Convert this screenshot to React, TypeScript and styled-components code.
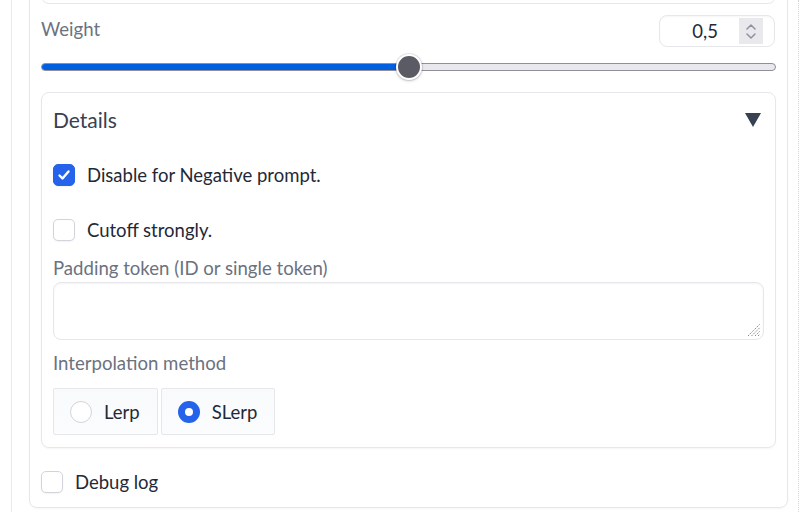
import React from "react";
import styled, { createGlobalStyle } from "styled-components";

const Global = createGlobalStyle`
  html, body { margin: 0; padding: 0; background: #ffffff; }
  body { font-family: "Lato", "Noto Sans", sans-serif; }
  * { box-sizing: border-box; }
`;

const Page = styled.div`
  width: 800px;
  height: 512px;
  overflow: hidden;
  display: flex;
  background: #ffffff;
`;

const Gutter = styled.div`
  width: 11px;
  flex: none;
`;

const Column = styled.div`
  width: 788px;
  flex: none;
  height: 512px;
  border-left: 1px solid #e9e9ee;
  border-right: 1px dotted #d4d4dc;
  padding: 0 10px 0 17px;
`;

const Card = styled.div`
  margin-top: -72px;
  border: 1px solid #e5e7eb;
  border-radius: 8px;
  padding: 11px 11px 14px 11px;
  display: flex;
  flex-direction: column;
  box-shadow: 0 1px 2px rgba(0, 0, 0, 0.04);
`;

const TextBox = styled.div<{ $h: number }>`
  position: relative;
  height: ${(p) => p.$h}px;
  border: 1px solid #e5e7eb;
  border-radius: 8px;
  background: #ffffff;
  box-shadow: inset 0 1px 2px rgba(0, 0, 0, 0.05);
`;

const Grip = styled.svg`
  position: absolute;
  right: 2px;
  bottom: 2px;
`;

const WeightRow = styled.div`
  margin-top: 11px;
  height: 32px;
  display: flex;
  justify-content: space-between;
  align-items: flex-start;
`;

const FieldLabel = styled.div`
  font-size: 18.6px;
  line-height: 28px;
  color: #6b7280;
`;

const NumberBox = styled.div`
  width: 116px;
  height: 32px;
  margin-right: 1px;
  border: 1px solid #e5e7eb;
  border-radius: 8px;
  display: flex;
  align-items: center;
  box-shadow: inset 0 1px 2px rgba(0, 0, 0, 0.04);
`;

const NumberValue = styled.span`
  flex: 1;
  text-align: right;
  padding-right: 21px;
  font-size: 18.5px;
  color: #1f2937;
`;

const Spinner = styled.div`
  width: 24px;
  height: 26px;
  margin-right: 11px;
  background: #e9e9ed;
  display: flex;
  flex-direction: column;
  align-items: center;
  justify-content: center;
  gap: 3px;
`;

const SliderWrap = styled.div`
  position: relative;
  margin-top: 7px;
  height: 26px;
  display: flex;
  align-items: center;
`;

const Track = styled.div`
  position: relative;
  width: 100%;
  height: 8px;
  border: 1px solid #8f8f9d;
  border-radius: 4px;
  background: #e9e9ed;
  overflow: hidden;
`;

const Fill = styled.div`
  position: absolute;
  left: -1px;
  top: -1px;
  bottom: -1px;
  background: #0060df;
  border-radius: 4px 0 0 4px;
`;

const Thumb = styled.div`
  position: absolute;
  top: 0;
  width: 26px;
  height: 26px;
  margin-left: -13px;
  border-radius: 50%;
  background: #5b5b66;
  border: 2px solid #ffffff;
  box-shadow: 0 0 0 1px rgba(0, 0, 0, 0.08), 0 1px 3px rgba(0, 0, 0, 0.2);
`;

const Accordion = styled.div`
  margin-top: 12px;
  border: 1px solid #e5e7eb;
  border-radius: 8px;
  padding: 11px 11px 12px 11px;
  display: flex;
  flex-direction: column;
  box-shadow: 0 1px 2px rgba(0, 0, 0, 0.04);
`;

const AccHeader = styled.div`
  height: 31px;
  display: flex;
  align-items: center;
  justify-content: space-between;
  font-size: 21px;
  color: #374151;
`;

const Arrow = styled.svg`
  margin-right: 3px;
`;

const CheckRow = styled.label<{ $mt: number }>`
  margin-top: ${(p) => p.$mt}px;
  height: 22px;
  display: flex;
  align-items: center;
  gap: 12px;
  font-size: 18.5px;
  color: #1f2937;
`;

const Box = styled.span<{ $on?: boolean }>`
  width: 22px;
  height: 22px;
  flex: none;
  border-radius: 5px;
  border: 1px solid ${(p) => (p.$on ? "#2563eb" : "#d1d5db")};
  background: ${(p) => (p.$on ? "#2563eb" : "#ffffff")};
  display: flex;
  align-items: center;
  justify-content: center;
  box-shadow: 0 1px 2px rgba(0, 0, 0, 0.05);
`;

const SubLabel = styled(FieldLabel)<{ $mt: number }>`
  margin-top: ${(p) => p.$mt}px;
  line-height: 24px;
`;

const PadArea = styled(TextBox)`
  margin-top: 2px;
`;

const RadioGroup = styled.div`
  margin-top: 13px;
  display: flex;
  gap: 3px;
`;

const RadioItem = styled.label`
  height: 47px;
  padding: 0 17px 0 16px;
  display: flex;
  align-items: center;
  gap: 12px;
  border: 1px solid #e5e7eb;
  border-radius: 2px;
  background: linear-gradient(to bottom, #f9fafb, #fbfcfd);
  font-size: 18.5px;
  color: #1f2937;
`;

const Dot = styled.span<{ $on?: boolean }>`
  width: 22px;
  height: 22px;
  flex: none;
  border-radius: 50%;
  border: ${(p) => (p.$on ? "7px solid #2563eb" : "1px solid #d1d5db")};
  background: #ffffff;
`;

const DebugRow = styled(CheckRow)``;

const Triangle = () => (
  <Arrow width="16" height="16" viewBox="0 0 16 16">
    <polygon points="0,1 16,1 8,15" fill="#374151" />
  </Arrow>
);

const Check = () => (
  <svg width="14" height="14" viewBox="0 0 14 14">
    <path d="M2.5 7.5 L5.5 10.5 L11.5 3.5" stroke="#ffffff" strokeWidth="2.4" fill="none" strokeLinecap="round" strokeLinejoin="round" />
  </svg>
);

const GripIcon = () => (
  <Grip width="14" height="14" viewBox="0 0 14 14">
    <g stroke="#8a8a8a" strokeWidth="1" strokeDasharray="1.5 1">
      <line x1="1" y1="13" x2="13" y2="1" />
      <line x1="4.5" y1="13" x2="13" y2="4.5" />
      <line x1="8" y1="13" x2="13" y2="8" />
      <line x1="11" y1="13" x2="13" y2="11" />
    </g>
  </Grip>
);

const Chevron = ({ up }: { up?: boolean }) => (
  <svg width="10" height="6" viewBox="0 0 10 6">
    <path
      d={up ? "M1 5 L5 1 L9 5" : "M1 1 L5 5 L9 1"}
      stroke="#8f8f9d"
      strokeWidth="1.5"
      fill="none"
      strokeLinecap="round"
      strokeLinejoin="round"
    />
  </svg>
);

export default function App() {
  const value = 0.5;
  return (
    <Page>
      <Global />
      <Gutter />
      <Column>
        <Card>
          <TextBox $h={64}>
            <GripIcon />
          </TextBox>
          <WeightRow>
            <FieldLabel>Weight</FieldLabel>
            <NumberBox>
              <NumberValue>0,5</NumberValue>
              <Spinner>
                <Chevron up />
                <Chevron />
              </Spinner>
            </NumberBox>
          </WeightRow>
          <SliderWrap>
            <Track>
              <Fill style={{ width: `${value * 100}%` }} />
            </Track>
            <Thumb style={{ left: `${value * 100}%` }} />
          </SliderWrap>
          <Accordion>
            <AccHeader>
              <span>Details</span>
              <Triangle />
            </AccHeader>
            <CheckRow $mt={29}>
              <Box $on>
                <Check />
              </Box>
              Disable for Negative prompt.
            </CheckRow>
            <CheckRow $mt={33}>
              <Box />
              Cutoff strongly.
            </CheckRow>
            <SubLabel $mt={15}>Padding token (ID or single token)</SubLabel>
            <PadArea $h={58}>
              <GripIcon />
            </PadArea>
            <SubLabel $mt={11}>Interpolation method</SubLabel>
            <RadioGroup>
              <RadioItem>
                <Dot />
                Lerp
              </RadioItem>
              <RadioItem>
                <Dot $on />
                SLerp
              </RadioItem>
            </RadioGroup>
          </Accordion>
          <DebugRow $mt={23}>
            <Box />
            Debug log
          </DebugRow>
        </Card>
      </Column>
    </Page>
  );
}
